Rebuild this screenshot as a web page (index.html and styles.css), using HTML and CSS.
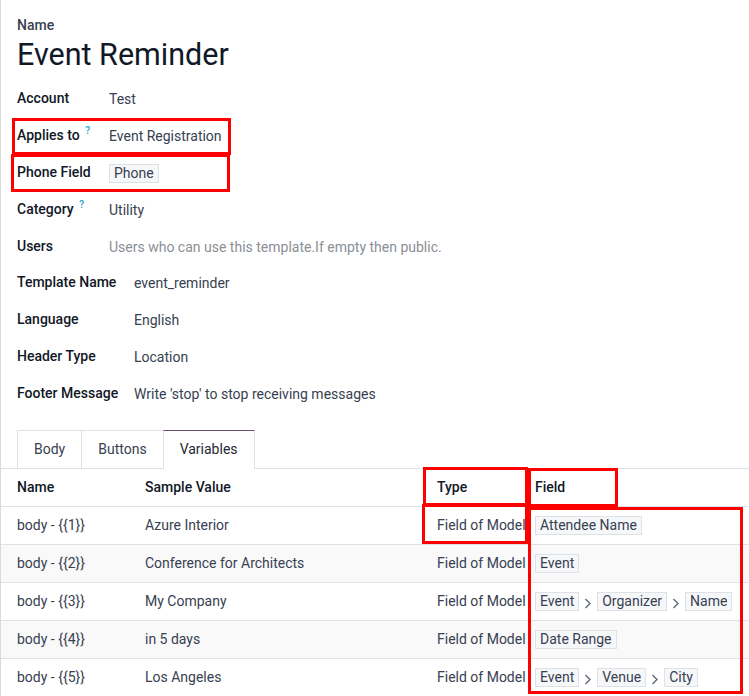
FILE: index.html
```html
<!DOCTYPE html>
<html lang="en">
<head>
<meta charset="utf-8">
<title>Event Reminder</title>
<link rel="stylesheet" href="styles.css">
</head>
<body>
<div class="sheet">
  <div class="head">
    <div class="name-label">Name</div>
    <h1 class="title">Event Reminder</h1>
  </div>

  <div class="fields g1">
    <div class="lbl">Account</div><div class="val">Test</div>
    <div class="lbl">Applies to <sup class="help">?</sup></div><div class="val">Event Registration</div>
    <div class="lbl">Phone Field</div><div class="val"><span class="chip">Phone</span></div>
    <div class="lbl">Category <sup class="help">?</sup></div><div class="val">Utility</div>
    <div class="lbl">Users</div><div class="val placeholder">Users who can use this template.If empty then public.</div>
    <span class="mark mark-applies"></span>
    <span class="mark mark-phone"></span>
  </div>

  <div class="fields g2">
    <div class="lbl">Template Name</div><div class="val">event_reminder</div>
    <div class="lbl">Language</div><div class="val">English</div>
    <div class="lbl">Header Type</div><div class="val">Location</div>
    <div class="lbl">Footer Message</div><div class="val">Write 'stop' to stop receiving messages</div>
  </div>

  <div class="tabs">
    <div class="tab">Body</div>
    <div class="tab">Buttons</div>
    <div class="tab active">Variables</div>
  </div>

  <div class="table-wrap">
    <table class="vars">
      <colgroup>
        <col class="c1"><col class="c2"><col class="c3"><col class="c4">
      </colgroup>
      <thead>
        <tr><th>Name</th><th>Sample Value</th><th>Type</th><th>Field</th></tr>
      </thead>
      <tbody>
        <tr><td>body - {{1}}</td><td>Azure Interior</td><td>Field of Model</td><td><div class="path"><span class="chip">Attendee Name</span></div></td></tr>
        <tr><td>body - {{2}}</td><td>Conference for Architects</td><td>Field of Model</td><td><div class="path"><span class="chip">Event</span></div></td></tr>
        <tr><td>body - {{3}}</td><td>My Company</td><td>Field of Model</td><td><div class="path"><span class="chip">Event</span><svg class="chev" viewBox="0 0 8 12"><path d="M1.5 2 L6 6.5 L1.5 11"/></svg><span class="chip">Organizer</span><svg class="chev" viewBox="0 0 8 12"><path d="M1.5 2 L6 6.5 L1.5 11"/></svg><span class="chip">Name</span></div></td></tr>
        <tr><td>body - {{4}}</td><td>in 5 days</td><td>Field of Model</td><td><div class="path"><span class="chip">Date Range</span></div></td></tr>
        <tr><td>body - {{5}}</td><td>Los Angeles</td><td>Field of Model</td><td><div class="path"><span class="chip">Event</span><svg class="chev" viewBox="0 0 8 12"><path d="M1.5 2 L6 6.5 L1.5 11"/></svg><span class="chip">Venue</span><svg class="chev" viewBox="0 0 8 12"><path d="M1.5 2 L6 6.5 L1.5 11"/></svg><span class="chip">City</span></div></td></tr>
      </tbody>
    </table>
    <span class="mark mark-type-h"></span>
    <span class="mark mark-field-h"></span>
    <span class="mark mark-type-c"></span>
    <span class="mark mark-field-c"></span>
  </div>
</div>
</body>
</html>
```

FILE: styles.css
```css
html, body {
  margin: 0;
  padding: 0;
  background: #ffffff;
}

body {
  font-family: Roboto, "Noto Sans", "Liberation Sans", sans-serif;
  font-size: 14px;
  line-height: 21px;
  color: #374151;
}

.sheet {
  border-left: 1px solid #d8dadd;
  min-height: 696px;
  box-sizing: border-box;
  overflow: hidden;
}

.head {
  padding: 15px 0 0 16px;
}

.name-label {
  font-weight: 500;
  color: #374151;
}

.title {
  margin: 0;
  font-size: 30.5px;
  font-weight: 400;
  line-height: 38px;
  color: #111827;
  padding-top: 0;
}

.fields {
  position: relative;
  display: grid;
  grid-auto-rows: 37px;
  align-items: center;
  padding-left: 16px;
}

.g1 {
  grid-template-columns: 92px 1fr;
  margin-top: 7px;
}

.g2 {
  grid-template-columns: 117px 1fr;
  margin-top: -1px;
}

.lbl {
  font-weight: 500;
  color: #111827;
  white-space: nowrap;
  margin-top: -2px;
}

.val {
  color: #374151;
  white-space: nowrap;
}

.placeholder {
  color: #8a8f96;
}

.help {
  font-size: 10px;
  color: #2c9fc8;
  vertical-align: top;
  position: relative;
  top: -5px;
  margin-left: 2px;
  font-weight: 500;
}

.chip {
  display: inline-block;
  background: #f6f7f9;
  border: 1px solid #dee2e6;
  line-height: 17px;
  padding: 0 4px;
  color: #374151;
}

.tabs {
  display: flex;
  margin-top: 17px;
  padding-left: 16px;
  border-bottom: 1px solid #dee2e6;
}

.tab {
  height: 37px;
  line-height: 37px;
  padding: 0 16px;
  border: 1px solid #dee2e6;
  border-bottom: none;
  margin-right: -1px;
  color: #374151;
  background: #ffffff;
}

.tab.active {
  border-top: 1px solid #714b67;
  color: #1f2937;
  height: 38px;
  margin-bottom: -1px;
  padding: 0 16px;
}

.table-wrap {
  position: relative;
}

.vars {
  width: 100%;
  border-collapse: collapse;
  table-layout: fixed;
}

.c1 { width: 136px; }
.c2 { width: 292px; }
.c3 { width: 98px; }

.vars th,
.vars td {
  height: 37px;
  padding: 0 0 0 8px;
  text-align: left;
  border-bottom: 1px solid #dee2e6;
  white-space: nowrap;
  overflow: hidden;
  vertical-align: middle;
}

.vars th {
  font-weight: 500;
  color: #111827;
}

.vars th:first-child,
.vars td:first-child {
  padding-left: 16px;
}

.vars tbody tr:nth-child(even) td {
  background: #f9f9fa;
}

.path {
  display: flex;
  align-items: center;
  gap: 5px;
}

.chev {
  width: 8px;
  height: 12px;
  margin-top: 2px;
  fill: none;
  stroke: #5b6270;
  stroke-width: 1.3;
}

.mark {
  position: absolute;
  border: 3px solid #ff0000;
  box-sizing: border-box;
  pointer-events: none;
}

.mark-applies { left: 11px; top: 37px; width: 219px; height: 37px; }
.mark-phone   { left: 10px; top: 73px; width: 219px; height: 38px; }

.mark-type-h  { left: 422px; top: -2px; width: 105px; height: 39px; }
.mark-field-h { left: 527px; top: -1px; width: 90px; height: 39px; }
.mark-type-c  { left: 421px; top: 35px; width: 106px; height: 40px; }
.mark-field-c { left: 527px; top: 38px; width: 215px; height: 187px; }
```
